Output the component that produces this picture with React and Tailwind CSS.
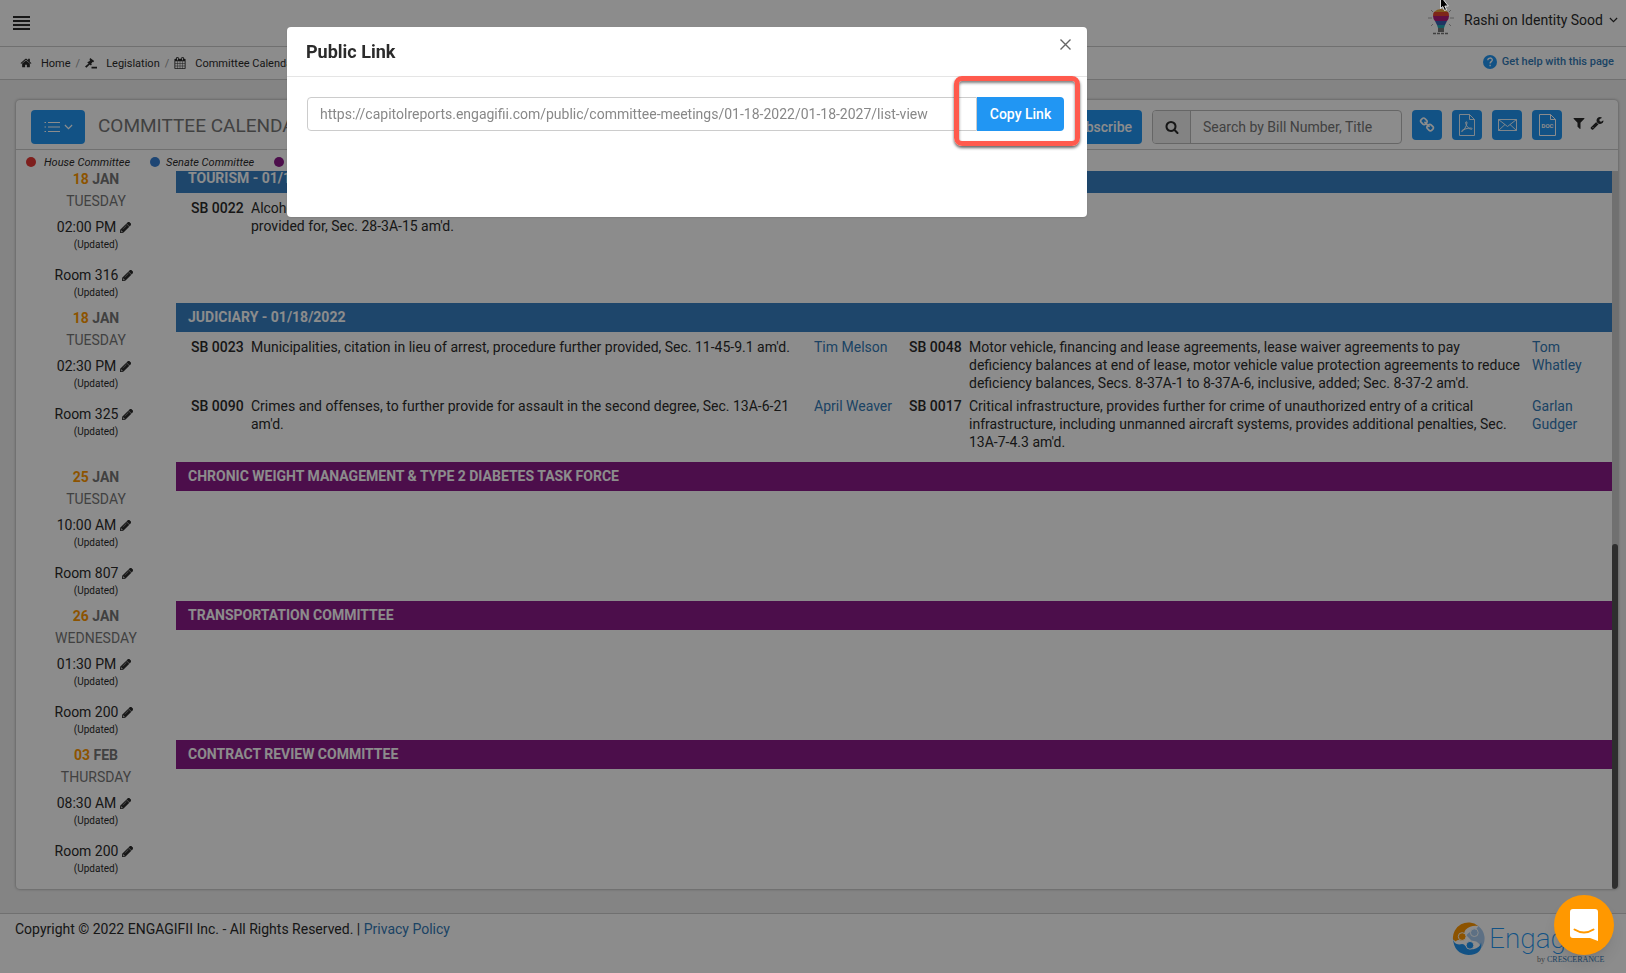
import React, { useState } from 'react';
import { FaPencilAlt } from 'react-icons/fa';

const icons = {
  home: 'M1472 992v480q0 26-19 45t-45 19h-384v-384h-256v384h-384q-26 0-45-19t-19-45v-480q0-1 .5-3t.5-3l575-474 575 474q1 2 1 6zm223-69l-62 74q-8 9-21 11h-3q-13 0-21-7l-692-577-692 577q-12 8-24 7-13-2-21-11l-62-74q-8-10-7-23.5t11-21.5l719-599q32-26 76-26t76 26l244 204v-195q0-14 9-23t23-9h192q14 0 23 9t9 23v408l219 182q10 8 11 21.5t-7 23.5z',
  calendar: 'M192 1664h288v-288h-288v288zm352 0h320v-288h-320v288zm-352-352h288v-320h-288v320zm352 0h320v-320h-320v320zm-352-384h288v-288h-288v288zm736 736h320v-288h-320v288zm-384-736h320v-288h-320v288zm768 736h288v-288h-288v288zm-384-352h320v-320h-320v320zm-352-864v-288q0-13-9.5-22.5t-22.5-9.5h-64q-13 0-22.5 9.5t-9.5 22.5v288q0 13 9.5 22.5t22.5 9.5h64q13 0 22.5-9.5t9.5-22.5zm736 864h288v-320h-288v320zm-384-384h320v-288h-320v288zm384 0h288v-288h-288v288zm32-480v-288q0-13-9.5-22.5t-22.5-9.5h-64q-13 0-22.5 9.5t-9.5 22.5v288q0 13 9.5 22.5t22.5 9.5h64q13 0 22.5-9.5t9.5-22.5zm384-64v1280q0 52-38 90t-90 38h-1408q-52 0-90-38t-38-90v-1280q0-52 38-90t90-38h128v-96q0-66 47-113t113-47h64q66 0 113 47t47 113v96h384v-96q0-66 47-113t113-47h64q66 0 113 47t47 113v96h128q52 0 90 38t38 90z',
  search: 'M1216 832q0-185-131.5-316.5t-316.5-131.5-316.5 131.5-131.5 316.5 131.5 316.5 316.5 131.5 316.5-131.5 131.5-316.5zm512 832q0 52-38 90t-90 38q-54 0-90-38l-343-342q-179 124-399 124-143 0-273.5-55.5t-225-150-150-225-55.5-273.5 55.5-273.5 150-225 225-150 273.5-55.5 273.5 55.5 225 150 150 225 55.5 273.5q0 220-124 399l343 343q37 37 37 90z',
  filter: 'M1595 295q17 41-14 70l-493 493v742q0 42-39 59-13 5-25 5-27 0-45-19l-256-256q-19-19-19-45v-486l-493-493q-31-29-14-70 17-39 59-39h1280q42 0 59 39z',
  wrench: 'M448 1472q0-26-19-45t-45-19-45 19-19 45 19 45 45 19 45-19 19-45zm644-420l-682 682q-37 37-90 37-52 0-91-37l-106-108q-38-36-38-90 0-53 38-91l681-681q39 98 114.5 173.5t173.5 114.5zm634-435q0 39-23 106-47 134-164.5 217.5t-258.5 83.5q-185 0-316.5-131.5t-131.5-316.5 131.5-316.5 316.5-131.5q58 0 121.5 16.5t107.5 46.5q16 11 16 28t-16 28l-293 169v224l193 107q5-3 79-48.5t135.5-81 70.5-35.5q15 0 23.5 10t8.5 25z',
  link: 'M1520 1216q0-40-28-68l-208-208q-28-28-68-28-42 0-72 32 3 3 19 18.5t21.5 21.5 15 19 13 25.5 3.5 27.5q0 40-28 68t-68 28q-15 0-27.5-3.5t-25.5-13-19-15-21.5-21.5-18.5-19q-33 31-33 73 0 40 28 68l206 207q27 27 68 27 40 0 68-26l147-146q28-28 28-67zm-703-705q0-40-28-68l-206-207q-28-28-68-28-39 0-68 27l-147 146q-28 28-28 67 0 40 28 68l208 208q27 27 68 27 42 0 72-31-3-3-19-18.5t-21.5-21.5-15-19-13-25.5-3.5-27.5q0-40 28-68t68-28q15 0 27.5 3.5t25.5 13 19 15 21.5 21.5 18.5 19q33-31 33-73zm895 705q0 120-85 203l-147 146q-83 83-203 83-121 0-204-85l-206-207q-83-83-83-203 0-123 88-209l-88-88q-86 88-208 88-120 0-204-84l-208-208q-84-84-84-204t85-203l147-146q83-83 203-83 121 0 204 85l206 207q83 83 83 203 0 123-88 209l88 88q86-88 208-88 120 0 204 84l208 208q84 84 84 204z',
};

const Icon = ({ name, className }) => (
  <svg className={className} viewBox="0 0 1792 1792" fill="currentColor" aria-hidden="true">
    <path d={icons[name]} />
  </svg>
);

const ChevronDown = ({ className }) => (
  <svg className={className} viewBox="0 0 10 6" fill="none" stroke="currentColor" strokeWidth="1.3" aria-hidden="true">
    <path d="M1 0.8l4 4 4-4" />
  </svg>
);

const meetings = [
  {
    day: '18',
    month: 'JAN',
    weekday: 'TUESDAY',
    time: '02:00 PM',
    room: 'Room 316',
    type: 'senate',
    title: 'TOURISM - 01/18/2022',
    bills: [
      [{ number: 'SB 0022', text: "Alcoholic beverages, wine festivals, licensing and sales by wine manufacturers further provided for, Sec. 28-3A-15 am'd.", sponsor: '' }],
    ],
  },
  {
    day: '18',
    month: 'JAN',
    weekday: 'TUESDAY',
    time: '02:30 PM',
    room: 'Room 325',
    type: 'senate',
    title: 'JUDICIARY - 01/18/2022',
    bills: [
      [
        { number: 'SB 0023', text: "Municipalities, citation in lieu of arrest, procedure further provided, Sec. 11-45-9.1 am'd.", sponsor: 'Tim Melson' },
        { number: 'SB 0048', text: "Motor vehicle, financing and lease agreements, lease waiver agreements to pay deficiency balances at end of lease, motor vehicle value protection agreements to reduce deficiency balances, Secs. 8-37A-1 to 8-37A-6, inclusive, added; Sec. 8-37-2 am'd.", sponsor: 'Tom Whatley' },
      ],
      [
        { number: 'SB 0090', text: "Crimes and offenses, to further provide for assault in the second degree, Sec. 13A-6-21 am'd.", sponsor: 'April Weaver' },
        { number: 'SB 0017', text: "Critical infrastructure, provides further for crime of unauthorized entry of a critical infrastructure, including unmanned aircraft systems, provides additional penalties, Sec. 13A-7-4.3 am'd.", sponsor: 'Garlan Gudger' },
      ],
    ],
  },
  { day: '25', month: 'JAN', weekday: 'TUESDAY', time: '10:00 AM', room: 'Room 807', type: 'joint', title: 'CHRONIC WEIGHT MANAGEMENT & TYPE 2 DIABETES TASK FORCE', bills: [] },
  { day: '26', month: 'JAN', weekday: 'WEDNESDAY', time: '01:30 PM', room: 'Room 200', type: 'joint', title: 'TRANSPORTATION COMMITTEE', bills: [] },
  { day: '03', month: 'FEB', weekday: 'THURSDAY', time: '08:30 AM', room: 'Room 200', type: 'joint', title: 'CONTRACT REVIEW COMMITTEE', bills: [] },
];

const Editable = ({ label }) => (
  <>
    <div className="flex items-center justify-center gap-1 pr-1 leading-[22px]">
      <span>{label}</span>
      <button type="button" aria-label={`Edit ${label}`}>
        <FaPencilAlt className="h-[11px] w-[11px] stroke-current stroke-[24px]" />
      </button>
    </div>
    <div className="text-[10px] leading-[13px]">(Updated)</div>
  </>
);

const MeetingRow = ({ meeting }) => (
  <section className="flex">
    <div className="w-40 shrink-0 py-1 text-center">
      <div className="font-bold leading-[22px] text-[#777]">
        <span className="text-[#ff9800]">{meeting.day}</span> {meeting.month}
      </div>
      <div className="leading-[22px] text-[#777]">{meeting.weekday}</div>
      <div className="mt-1">
        <Editable label={meeting.time} />
      </div>
      <div className="mt-[13px]">
        <Editable label={meeting.room} />
      </div>
    </div>
    <div className="min-w-0 flex-1">
      <h2 className={`px-3 font-bold leading-[29px] text-white ${meeting.type === 'senate' ? 'bg-[#3880c4]' : 'bg-[#8b1a89]'}`}>
        {meeting.title}
      </h2>
      {meeting.bills.length > 0 && (
        <table className="mt-px mb-[11px] w-full table-fixed border-collapse text-left leading-[18px]">
          <colgroup>
            <col className="w-[75px]" />
            <col />
            <col className="w-20" />
            <col className="w-[75px]" />
            <col />
            <col className="w-20" />
          </colgroup>
          <tbody>
            {meeting.bills.map((row, i) => (
              <tr key={i} className="align-top">
                {row.map((bill) => (
                  <React.Fragment key={bill.number}>
                    <th className="pt-[5px] pl-[15px] font-medium">{bill.number}</th>
                    <td className="pt-[5px] pr-2">{bill.text}</td>
                    <td className="pt-[5px] last:pr-4">
                      <a href="#sponsor" className="text-[#337ab7]">{bill.sponsor}</a>
                    </td>
                  </React.Fragment>
                ))}
                {row.length === 1 && <td colSpan={3}></td>}
              </tr>
            ))}
          </tbody>
        </table>
      )}
    </div>
  </section>
);

const TopBar = () => (
  <header className="flex h-[47px] shrink-0 items-center justify-between border-b border-[#ccc] bg-white pr-2 pl-[13px]">
    <button type="button" aria-label="Menu">
      <svg className="h-[14px] w-[17px]" viewBox="0 0 17 14" fill="currentColor">
        <path d="M0 0h17v2H0zM0 4h17v2H0zM0 8h17v2H0zM0 12h17v2H0z" />
      </svg>
    </button>
    <button type="button" className="flex items-center gap-[6px] pb-[6px]">
      <svg className="mt-1 h-7 w-[26px]" viewBox="0 0 26 28" aria-hidden="true">
        <path d="M0 10h4M22 10h4M3 2l2 2M23 2l-2 2M3 18l2-2M23 18l-2-2" stroke="#aaa" strokeWidth="1" />
        <path d="M6 4q3-3 7-3t7 3z" fill="#e8a33a" />
        <path d="M5 8q0-3 1-4h14q1 1 1 4z" fill="#e8452f" />
        <path d="M5 8h16q0 3-2 5H7Q5 11 5 8z" fill="#b01c7a" />
        <path d="M7 13h12l-2 4H9z" fill="#3a5fb5" />
        <path d="M9 17h8l-1 3h-6z" fill="#26a6b5" />
        <path d="M10 20h6v4h-6z" fill="#777" />
        <path d="M5 25.500h16" stroke="#777" strokeWidth="1.500" strokeDasharray="3 1" />
      </svg>
      <span className="pl-1">Rashi on Identity Sood</span>
      <ChevronDown className="h-[6px] w-[9px]" />
    </button>
  </header>
);

const Breadcrumb = () => (
  <nav className="flex h-[33px] shrink-0 items-center justify-between border-b border-[#ccc] bg-white pr-3 pl-5 text-[11px]">
    <ol className="flex items-center pt-px">
      <li className="flex items-center">
        <Icon name="home" className="mr-[9px] h-3 w-3" />
        <a href="#home">Home</a>
      </li>
      <li className="flex items-center">
        <span className="px-[5px] text-[#999]">/</span>
        <svg className="mr-[9px] h-3 w-3" viewBox="0 0 12 12" fill="currentColor" aria-hidden="true">
          <path d="M5.2 1l4 3-1 1.3-.7-.4-1.3 1.8.7.6-1 1.2-3.6-2.9 1-1.2.6.4 1.3-1.8-.8-.6zM3.6 6.6l1.2 1-3.4 3.1L0 9.600zM6.500 9.800h5.500v1.600H6.500z" />
        </svg>
        <a href="#legislation">Legislation</a>
      </li>
      <li className="flex items-center">
        <span className="px-[5px] text-[#999]">/</span>
        <Icon name="calendar" className="mr-[9px] h-3 w-3" />
        <a href="#calendar">Committee Calendar</a>
      </li>
    </ol>
    <a href="#help" className="flex items-center gap-[5px] pb-[2px] font-medium text-[#337ab7]">
      <svg className="h-[14px] w-[14px]" viewBox="0 0 14 14" fill="none" aria-hidden="true">
        <circle cx="7" cy="7" r="7" fill="#2196f3" />
        <path d="M4.800 5.300c0-3 4.500-3 4.500-.2 0 1.500-2.200 1.600-2.200 3.300M7.100 9.700v1.500" stroke="#fff" strokeWidth="1.300" />
      </svg>
      Get help with this page
    </a>
  </nav>
);

const toolButton = 'flex h-[30px] w-[30px] items-center justify-center rounded-sm bg-[#2196f3] text-white';

const CardHeader = () => (
  <div className="flex h-[50px] shrink-0 items-start justify-between border-b border-[#ccc] pt-[10px] pr-[14px] pl-[15px]">
    <div className="flex items-center">
      <button type="button" aria-label="View" className="flex h-[34px] w-[54px] items-center justify-center gap-1 rounded bg-[#2196f3] text-white">
        <svg className="h-3 w-4" viewBox="0 0 16 12" fill="none" stroke="currentColor" strokeWidth="1.200" aria-hidden="true">
          <path d="M4 1.500h12M4 6h12M4 10.500h12M.5 1.500h1.500M.5 6h1.500M.5 10.500h1.500" />
        </svg>
        <ChevronDown className="h-[6px] w-[9px]" />
      </button>
      <h1 className="pb-[2px] pl-[13px] text-[19px] leading-[30px] text-[#777]">COMMITTEE CALENDAR</h1>
    </div>
    <div className="flex items-start gap-[10px]">
      <button type="button" className="h-[34px] rounded bg-[#2196f3] px-[10px] font-medium text-white">Subscribe</button>
      <div className="flex h-[34px] w-[250px] overflow-hidden rounded border border-[#bbb]">
        <label htmlFor="bill-search" className="flex w-[38px] shrink-0 items-center justify-center border-r border-[#bbb] bg-[#eee]">
          <Icon name="search" className="h-[14px] w-[14px]" />
        </label>
        <input id="bill-search" type="text" placeholder="Search by Bill Number, Title" className="min-w-0 flex-1 px-3 placeholder:text-[#777]" />
      </div>
      <button type="button" aria-label="Copy public link" className={toolButton}>
        <Icon name="link" className="h-4 w-4" />
      </button>
      <button type="button" aria-label="Export PDF" className={toolButton}>
        <svg className="h-[22px] w-4" viewBox="0 0 16 22" fill="none" stroke="currentColor" strokeWidth=".9" aria-hidden="true">
          <path d="M.5.500h10l5 5v16H.5zM10.500.500v5h5" />
          <path d="M3 17.500c2-1 4.500-5.500 5-8.500.2-1.800-1.600-1.800-1.300 0 .4 3 3 6 5.600 6.300 1.300 0 1-1.300-.5-1.300-3 0-7 1.200-8.800 2.500-.8.700-.5 1.300 0 1z" />
        </svg>
      </button>
      <button type="button" aria-label="Email" className={toolButton}>
        <svg className="h-3 w-[19px]" viewBox="0 0 19 12" fill="none" stroke="currentColor" strokeWidth=".9" aria-hidden="true">
          <path d="M.5.500h18v11H.5zM.5.500l9 7 9-7M.5 11.500l6.500-6M18.500 11.500l-6.500-6" />
        </svg>
      </button>
      <button type="button" aria-label="Export DOC" className={toolButton}>
        <svg className="h-[22px] w-[17px]" viewBox="0 0 17 22" fill="none" stroke="currentColor" aria-hidden="true">
          <path d="M.5.500h11l5 5v16H.5zM11.500.500v5h5" />
          <text x="8.500" y="13.500" textAnchor="middle" fontSize="6" fontWeight="700" fill="currentColor" stroke="none">DOC</text>
        </svg>
      </button>
      <div className="flex gap-1 pt-[6px]">
        <button type="button" aria-label="Filter">
          <Icon name="filter" className="h-[14px] w-[14px]" />
        </button>
        <button type="button" aria-label="Settings">
          <Icon name="wrench" className="h-[14px] w-[14px]" />
        </button>
      </div>
    </div>
  </div>
);

const Legend = () => (
  <ul className="flex h-[21px] shrink-0 items-center gap-5 px-[10px] pt-1 text-[11px] italic">
    <li className="flex items-center gap-2">
      <span className="h-[10px] w-[10px] rounded-full bg-[#e53935]"></span>House Committee
    </li>
    <li className="flex items-center gap-[6px]">
      <span className="h-[10px] w-[10px] rounded-full bg-[#3880d4]"></span>Senate Committee
    </li>
    <li className="flex items-center gap-[6px]">
      <span className="h-[10px] w-[10px] rounded-full bg-[#8b1a89]"></span>Joint Committee
    </li>
  </ul>
);

const Footer = () => (
  <footer className="flex h-[60px] shrink-0 items-start justify-between border-t border-[#ccc] bg-white pr-[30px] pl-[15px]">
    <p className="pt-1 leading-[22px]">
      Copyright © 2022 ENGAGIFII Inc. - All Rights Reserved. | <a href="#privacy" className="text-[#337ab7]">Privacy Policy</a>
    </p>
    <div className="flex w-36 pt-2">
      <svg className="h-[33px] w-[33px] shrink-0" viewBox="0 0 34 34" aria-hidden="true">
        <path d="M1 18A16 16 0 0 1 27 4Q19 3 14 8q-2 3-1 5l-3 6q-5-1-6 1z" fill="#ff9800" />
        <path d="M27 4a16 16 0 0 1 3 23q-1-5-5-7l-5-1-5-5q1-3 5-4 5-1 7-6z" fill="#a9cdf0" />
        <path d="M1 17q1 7 8 6 3-1 5 2 3 4 8 3 7-2 8-7 2 12-13 13Q2 33 1 17z" fill="#2196f3" />
        <circle cx="10.500" cy="15" r="4" fill="#ff9800" stroke="#fff" />
        <circle cx="23" cy="11" r="4" fill="#a9cdf0" stroke="#fff" />
        <circle cx="18.500" cy="24" r="4" fill="#2196f3" stroke="#fff" />
      </svg>
      <div className="pl-1">
        <div className="text-[28px] font-extralight leading-[33px] text-[#2196f3]">Engag</div>
        <div className="pl-12 font-['Liberation_Serif',serif] text-[8px] leading-[10px] whitespace-nowrap text-[#337ab7]">
          <span className="text-[#777]">by</span> CRESCERANCE
        </div>
      </div>
    </div>
  </footer>
);

const PublicLinkModal = ({ onClose }) => {
  const [copied, setCopied] = useState(false);
  const url = 'https://capitolreports.engagifii.com/public/committee-meetings/01-18-2022/01-18-2027/list-view';

  const copyLink = () => {
    navigator.clipboard?.writeText(url);
    setCopied(true);
  };

  return (
    <div className="fixed inset-0 flex items-start bg-black/45 pt-[27px] pl-[287px]">
      <div role="dialog" aria-label="Public Link" className="h-[190px] w-[800px] rounded bg-white shadow-sm">
        <div className="flex h-[50px] items-start justify-between border-b border-[#e5e5e5] pr-4 pl-[19px]">
          <h2 className="pt-[13px] text-lg leading-6 font-bold">Public Link</h2>
          <button type="button" aria-label="Close" onClick={onClose} className="pt-3">
            <svg className="h-[11px] w-[11px]" viewBox="0 0 11 11" fill="none" stroke="#666" strokeWidth="1.400">
              <path d="M.5.500l10 10M10.500.500l-10 10" />
            </svg>
          </button>
        </div>
        <div className="flex pt-5 pr-[23px] pl-5">
          <input
            type="text"
            aria-label="Public link"
            readOnly
            value={url}
            className="h-[34px] min-w-0 flex-1 rounded-l border border-[#ccc] px-3 text-[#888]"
          />
          <div className="relative">
            <button type="button" onClick={copyLink} className="h-[34px] w-[87px] rounded-r bg-[#2196f3] font-medium text-white">
              {copied ? 'Copied' : 'Copy Link'}
            </button>
            <div className="pointer-events-none absolute -top-[21px] -right-4 -left-[23px] h-[70px] rounded-lg border-5 border-[#ff5a4d] shadow-[0_2px_3px_rgba(0,0,0,0.6),inset_0_2px_3px_rgba(0,0,0,0.5)]"></div>
          </div>
        </div>
      </div>
    </div>
  );
};

const App = () => {
  const [showLink, setShowLink] = useState(true);

  return (
    <div className="flex h-screen flex-col bg-[#f0f0f0] font-[Roboto,sans-serif] text-sm text-[#2b2b2b]">
      <TopBar />
      <Breadcrumb />
      <main className="flex min-h-0 flex-1 flex-col px-2 pt-5 pb-6 pl-4">
        <div className="flex min-h-0 flex-1 flex-col overflow-hidden rounded bg-white shadow-[0_0_3px_rgba(0,0,0,0.4)]">
          <CardHeader />
          <Legend />
          <div className="flex min-h-0 flex-1">
            <div className="flex min-w-0 flex-1 flex-col justify-end overflow-hidden pb-[10px]">
              {meetings.map((meeting) => (
                <MeetingRow key={meeting.title} meeting={meeting} />
              ))}
            </div>
            <div className="flex w-[6px] flex-col justify-end bg-[#ccc]">
              <div className="h-[48%] rounded-full bg-[#555]"></div>
            </div>
          </div>
        </div>
      </main>
      <Footer />

      {showLink && <PublicLinkModal onClose={() => setShowLink(false)} />}

      <button type="button" aria-label="Open chat" className="fixed right-3 bottom-[18px] flex h-[60px] w-[60px] items-center justify-center rounded-full bg-[#ff9800] shadow-lg">
        <svg className="h-8 w-7" viewBox="0 0 28 32" fill="none" aria-hidden="true">
          <path d="M3 0h22a3 3 0 0 1 3 3v29l-8-3H3a3 3 0 0 1-3-3V3a3 3 0 0 1 3-3z" fill="#fff" />
          <path d="M4.500 20.500q9.500 6 19 0" stroke="#ff9800" strokeWidth="2" strokeLinecap="round" />
        </svg>
      </button>

      <svg className="pointer-events-none fixed top-0 left-[1440px] h-[11px] w-[9px]" viewBox="0 0 9 11" aria-hidden="true">
        <path d="M.5 -4v12.500l2.300-2 1.700 4 2-.9-1.700-3.600h3.500z" fill="#000" stroke="#fff" strokeWidth=".8" />
      </svg>
    </div>
  );
};

export default App;
